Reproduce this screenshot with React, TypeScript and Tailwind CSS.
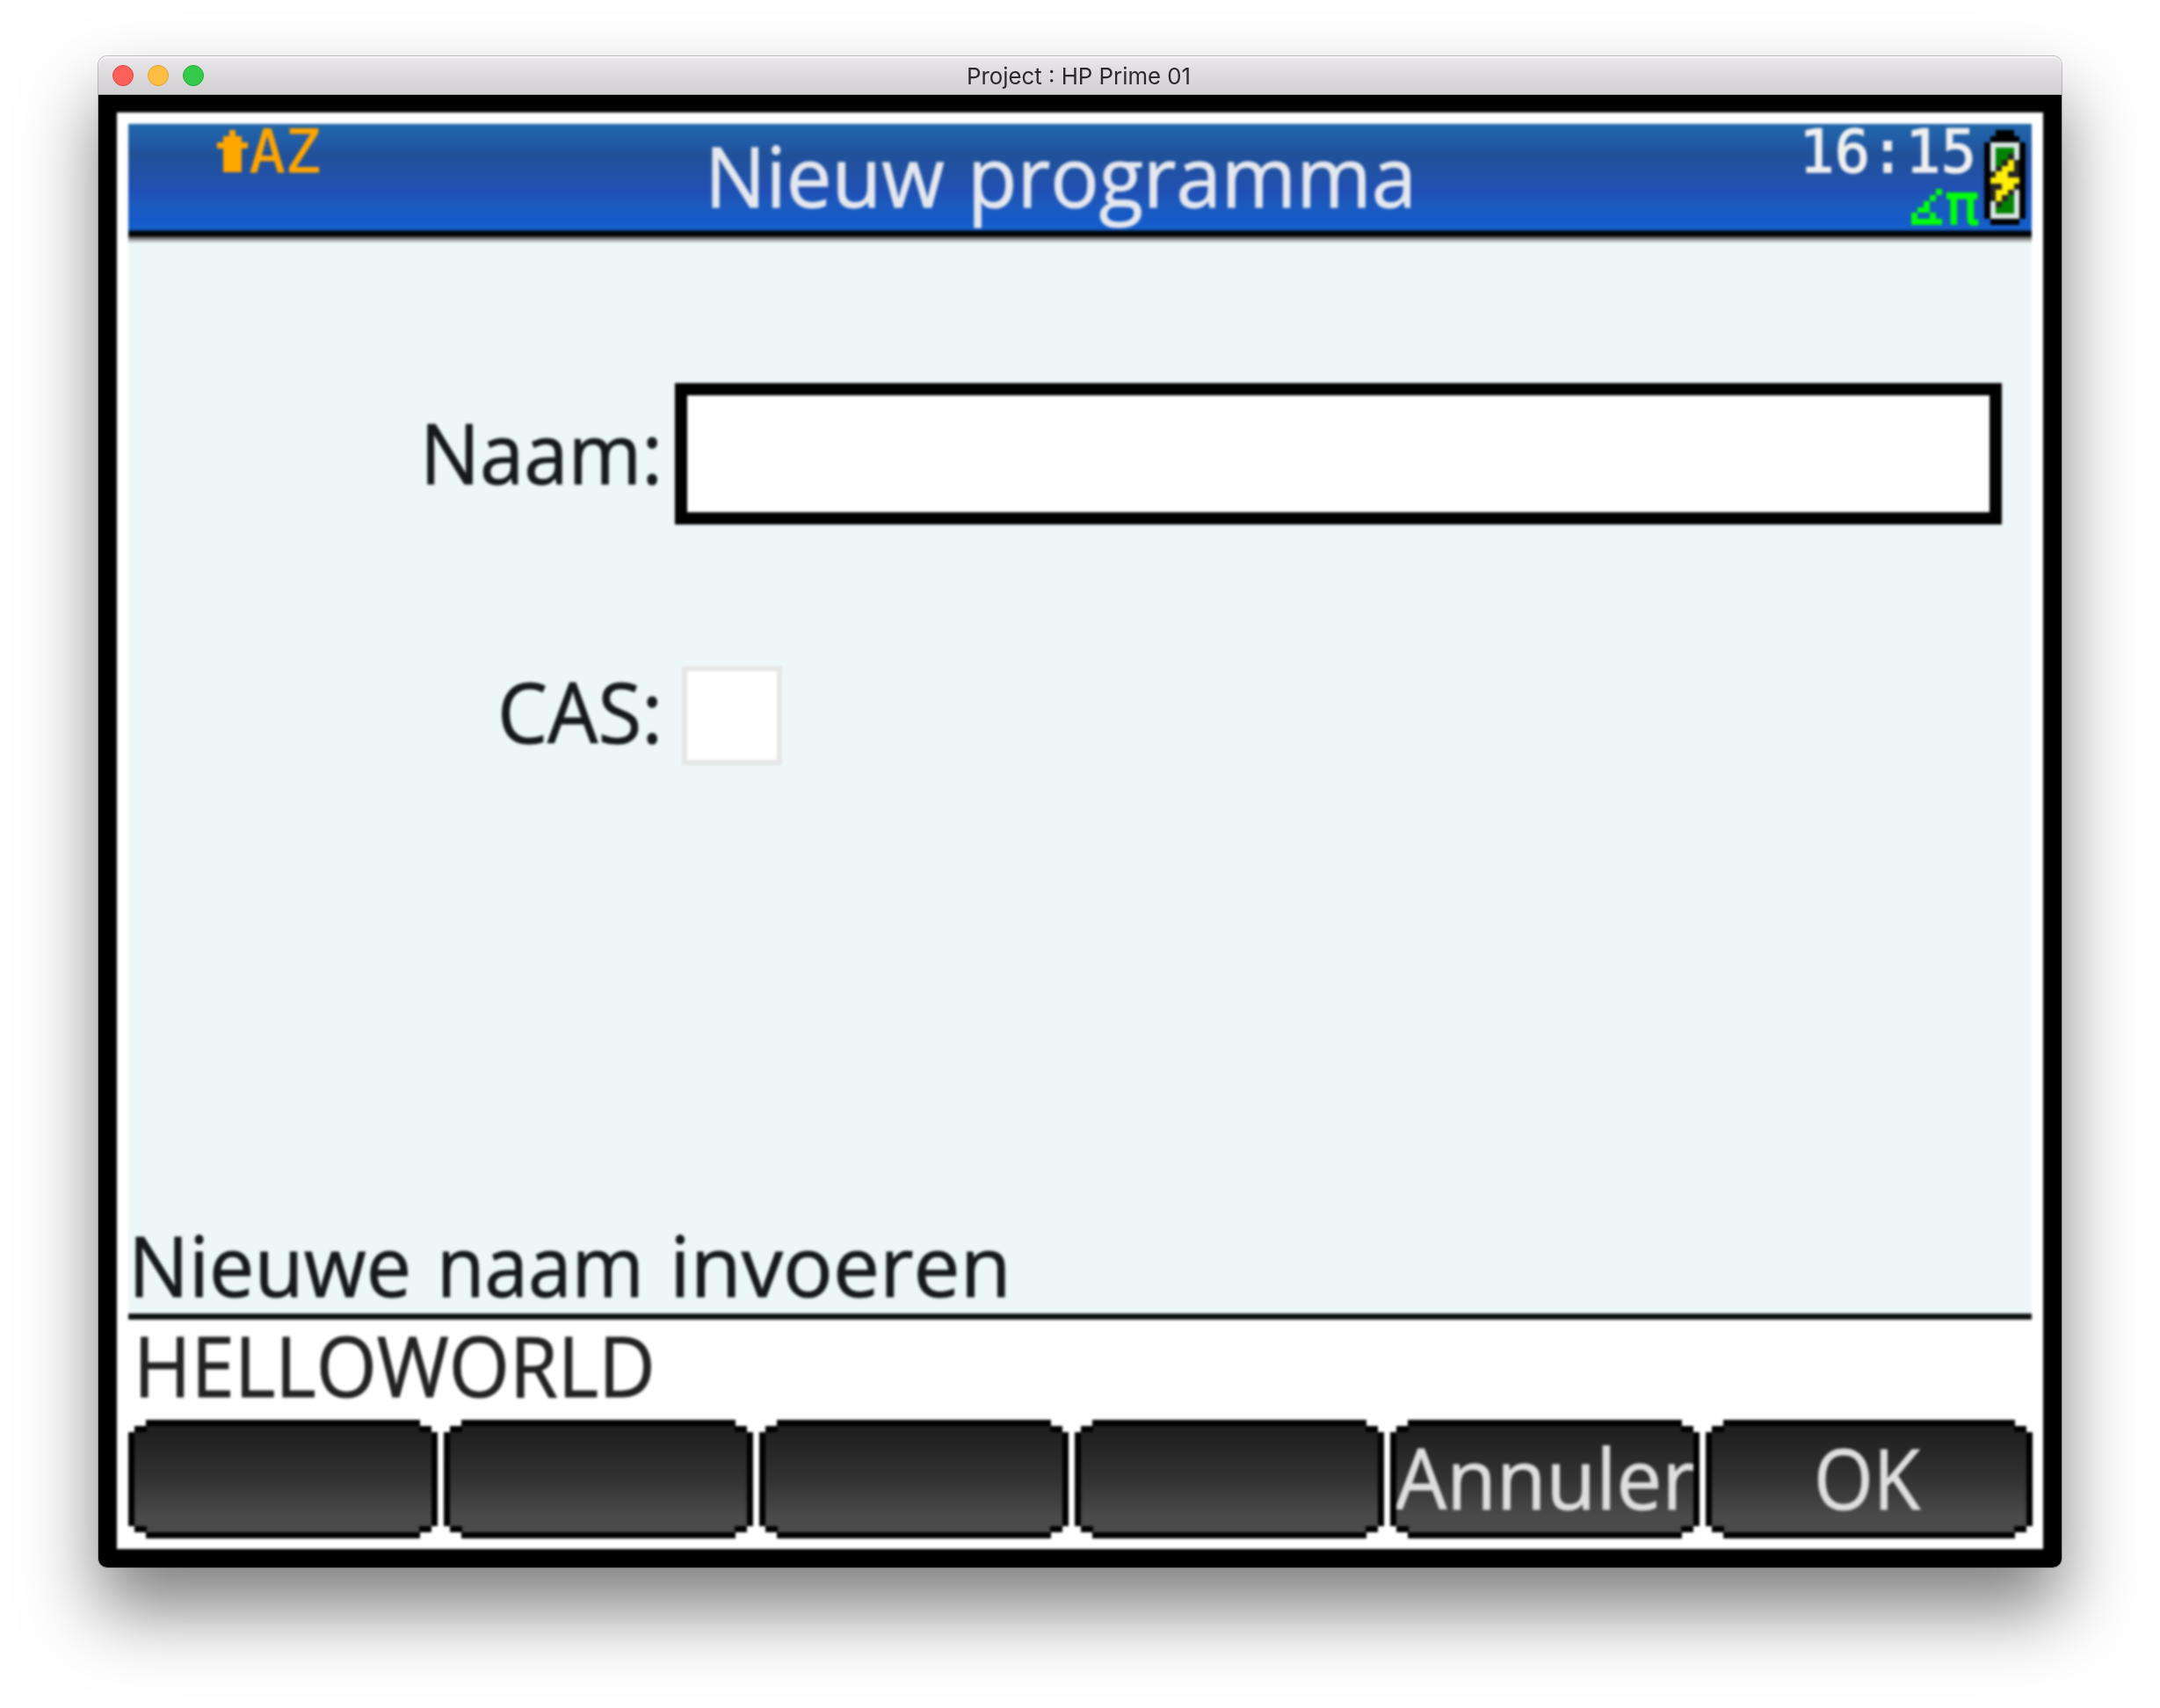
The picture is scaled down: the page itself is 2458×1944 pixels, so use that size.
import { useLayoutEffect, useRef, useState } from 'react';

// A word stretched horizontally to an exact advance width.
function Word({ text, width, className = '' }: { text: string; width: number; className?: string }) {
  const ref = useRef<HTMLSpanElement>(null);
  const [scale, setScale] = useState(1);
  useLayoutEffect(() => {
    if (ref.current) setScale(width / ref.current.offsetWidth);
  }, [text, width]);
  return (
    <span className={`block shrink-0 ${className}`} style={{ width }}>
      <span ref={ref} className="inline-block origin-left whitespace-pre" style={{ transform: `scaleX(${scale})` }}>
        {text}
      </span>
    </span>
  );
}

const PALETTE: Record<string, string> = {
  k: '#000000',
  d: '#252525',
  w: '#d9e6e4',
  g: '#008200',
  y: '#ffee08',
  l: '#00ff0c',
  o: '#ffa500',
};

const ARROW = ['..o..', '.ooo.', 'ooooo', '.ooo.', '.ooo.', '.ooo.', '.ooo.'];
const ANGLE = ['....l', '...l.', '..l..', '.ll..', 'l..l.', 'lllll'];
const BATTERY = [
  '..kkk..',
  '.kkkkk.',
  'kwwwwwk',
  'kwgggwk',
  'kwggdwk',
  'kwgdydk',
  'kwdyydk',
  'kdyyddk',
  'kyyyyyk',
  'kddyydk',
  'kdyydwk',
  'kdydgwk',
  'kwdggwk',
  'kwgggwk',
  'kwwwwwk',
  '.kkkkk.',
];

function PixelIcon({ rows, className }: { rows: string[]; className: string }) {
  return (
    <svg
      viewBox={`0 0 ${rows[0].length} ${rows.length}`}
      preserveAspectRatio="none"
      shapeRendering="crispEdges"
      className={`block shrink-0 ${className}`}
    >
      {rows.flatMap((row, y) =>
        row.split('').map((c, x) =>
          c === '.' ? null : <rect key={`${x}-${y}`} x={x} y={y} width={1} height={1} fill={PALETTE[c]} />,
        ),
      )}
    </svg>
  );
}

function SoftKey({ label, width, wide }: { label?: string; width?: number; wide?: boolean }) {
  return (
    <button
      className={`h-[135px] shrink-0 bg-black p-[7px] [clip-path:polygon(20px_0,calc(100%-20px)_0,calc(100%-20px)_7px,calc(100%-7px)_7px,calc(100%-7px)_14px,100%_14px,100%_calc(100%-14px),calc(100%-7px)_calc(100%-14px),calc(100%-7px)_calc(100%-7px),calc(100%-20px)_calc(100%-7px),calc(100%-20px)_100%,20px_100%,20px_calc(100%-7px),7px_calc(100%-7px),7px_calc(100%-14px),0_calc(100%-14px),0_14px,7px_14px,7px_7px,20px_7px)] ${wide ? 'w-[372px]' : 'w-[352px]'}`}
    >
      <span className="flex h-full justify-center bg-linear-to-b from-[#1f1f1f] from-5% via-[#323232] via-50% to-[#4a4a4a] to-85% pt-[10px] text-[#dedede] [-webkit-text-stroke:1px_#dedede] [clip-path:polygon(14px_0,calc(100%-14px)_0,calc(100%-14px)_7px,100%_7px,100%_calc(100%-7px),calc(100%-14px)_calc(100%-7px),calc(100%-14px)_100%,14px_100%,14px_calc(100%-7px),0_calc(100%-7px),0_7px,14px_7px)]">
        {label && width && <Word text={label} width={width} className={wide ? '-ml-[5px]' : ''} />}
      </span>
    </button>
  );
}

export default function App() {
  return (
    <div className="flex h-[1944px] w-[2458px] items-start overflow-hidden bg-white pt-16 pl-28">
      <div className="h-[1720px] w-[2234px] rounded-[10px] shadow-[0_0_0_1px_rgba(0,0,0,0.22),0_48px_84px_rgba(0,0,0,0.5)]">
        <div className="flex h-11 items-center rounded-t-[10px] border-b border-[#b3b1b3] bg-linear-to-b from-[#e9e7e9] to-[#d1cfd1] shadow-[inset_0_2px_0_#f4f3f4]">
          <div className="flex w-[987px] gap-4 pl-4">
            <span className="size-6 rounded-full border border-[#e2443f] bg-[#fc605b]" />
            <span className="size-6 rounded-full border border-[#dfa034] bg-[#fdbe41]" />
            <span className="size-6 rounded-full border border-[#24ab36] bg-[#34c94a]" />
          </div>
          <Word
            text="Project : HP Prime 01"
            width={255}
            className="mt-0.5 ml-px font-['Inter'] text-[26px] leading-8 text-[#2c2a2c]"
          />
        </div>

        <div className="h-[1676px] rounded-b-[10px] bg-black px-[21px] pt-5">
          <div className="h-[1635px] bg-white px-[13px] pt-[13px] font-['Open_Sans'] text-[95px] leading-[96px] blur-[1.4px]">
            <header className="flex h-[136px] bg-[linear-gradient(to_bottom,#2168a9_0px,#215aa6_22px,#205198_34px,#2151a4_54px,#2050b5_78px,#1b59bc_90px,#165ac8_108px,#1660cd_120px,#000_123px,#000_127px,#777_130px,#eef7f7_136px)]">
              <div className="flex w-[656px] pt-[7px] pl-[101px]">
                <PixelIcon rows={ARROW} className="h-[48px] w-[35px]" />
                <span className="ml-[2px] block h-12 font-['DejaVu_Sans_Mono'] text-[67px] leading-[51px] text-[#ffa500] [-webkit-text-stroke:1px_#ffa500]">
                  AZ
                </span>
              </div>
              <div className="flex w-[1239px] gap-[26px] pt-[10px] text-[#e4e7ee] [-webkit-text-stroke:1px_#e4e7ee]">
                <Word text="Nieuw" width={273} />
                <Word text="programma" width={511} />
              </div>
              <div className="flex w-[211px] flex-col items-end pt-[7px]">
                <span className="mr-[3px] block h-[61px] font-['DejaVu_Sans_Mono'] text-[67px] leading-[51px] text-[#efefef] [-webkit-text-stroke:1.5px_#efefef]">
                  16:15
                </span>
                <div className="flex h-12 items-end">
                  <PixelIcon rows={ANGLE} className="mb-px h-[41px] w-[35px]" />
                  <span className="ml-[3px] block h-12 font-['DejaVu_Sans_Mono'] text-[64px] leading-[49px] text-[#00ff0c] [-webkit-text-stroke:2px_#00ff0c]">
                    π
                  </span>
                </div>
              </div>
              <PixelIcon rows={BATTERY} className="mt-[7px] ml-[6px] h-[108px] w-[47px]" />
            </header>

            <main className="flex h-[1218px] flex-col bg-[#eef7f7] pt-[159px] text-[#151919] [-webkit-text-stroke:1px_#151919]">
              <div className="flex h-[161px] pl-[332px]">
                <Word text="Naam:" width={276} className="mt-[30px]" />
                <div className="ml-[14px] w-[1510px] border-[14px] border-black bg-white" />
              </div>
              <div className="mt-[161px] flex h-[113px] pl-[420px]">
                <Word text="CAS:" width={188} className="mt-[3px]" />
                <div className="ml-[22px] w-[114px] border-[6px] border-[#e6e6e6] bg-white" />
              </div>
              <div className="mt-auto mb-[8px] flex gap-[29px]">
                <Word text="Nieuwe" width={322} />
                <Word text="naam" width={236} />
                <Word text="invoeren" width={389} />
              </div>
            </main>

            <div className="h-[121px] border-t-[7px] border-[#101212] bg-white pl-[6px] text-[#222] [-webkit-text-stroke:1px_#222]">
              <Word text="HELLOWORLD" width={594} className="mt-[3px]" />
            </div>

            <footer className="flex gap-[7px]">
              <SoftKey />
              <SoftKey />
              <SoftKey />
              <SoftKey />
              <SoftKey label="Annuler" width={341} />
              <SoftKey label="OK" width={121} wide />
            </footer>
          </div>
        </div>
      </div>
    </div>
  );
}
